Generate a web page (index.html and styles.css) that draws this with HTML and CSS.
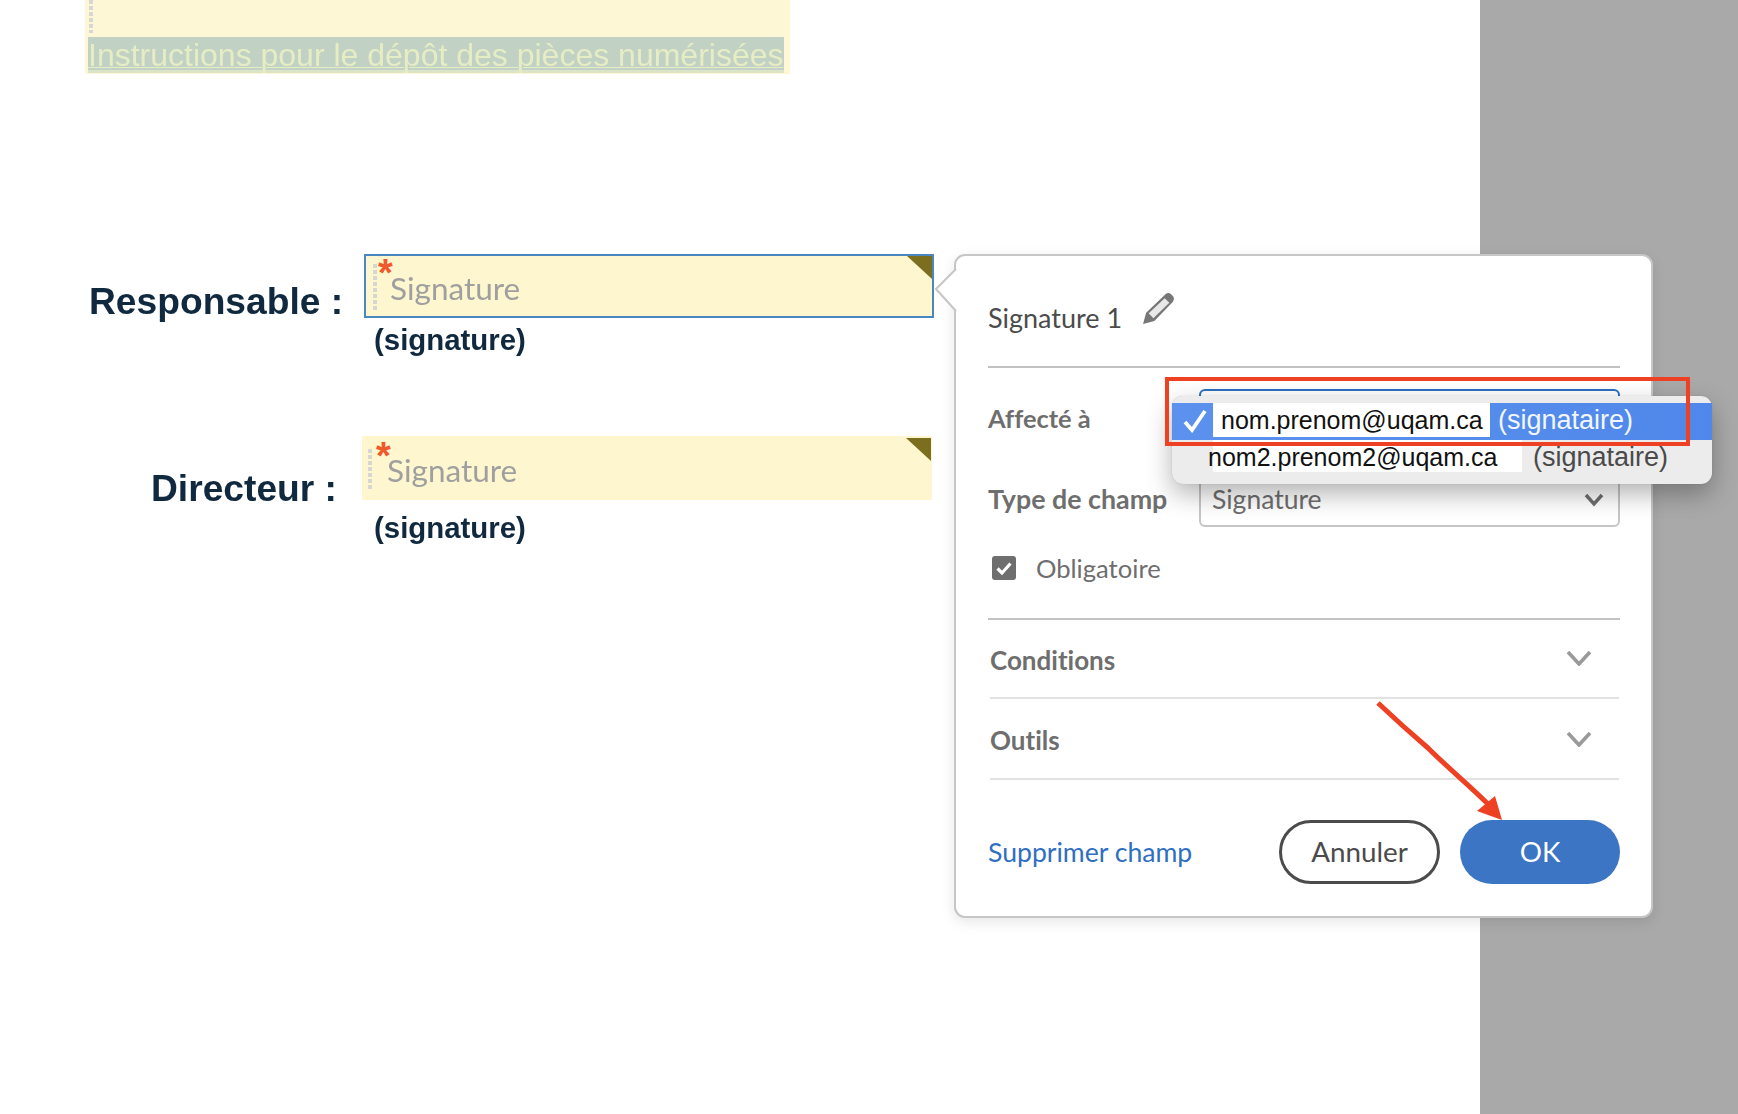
FILE: index.html
```html
<!DOCTYPE html>
<html lang="fr">
<head>
<meta charset="utf-8">
<title>Signature</title>
<link rel="stylesheet" href="styles.css">
</head>
<body>
<div class="stage">
  <main class="doc">
    <div class="notice">
      <div class="dots notice-dots"></div>
      <a class="notice-link">Instructions pour le dépôt des pièces numérisées</a>
    </div>
    <section class="sign-row row-a">
      <div class="sign-label">Responsable :</div>
      <div class="sign-col">
        <div class="field field-active">
          <span class="dots field-dots"></span>
          <span class="star">*</span>
          <span class="field-text">Signature</span>
          <span class="corner"></span>
        </div>
        <div class="caption">(signature)</div>
      </div>
    </section>
    <section class="sign-row row-b">
      <div class="sign-label">Directeur :</div>
      <div class="sign-col">
        <div class="field">
          <span class="dots field-dots"></span>
          <span class="star">*</span>
          <span class="field-text">Signature</span>
          <span class="corner"></span>
        </div>
        <div class="caption">(signature)</div>
      </div>
    </section>
  </main>
  <aside class="gutter"></aside>

  <div class="panel">
    <svg class="pointer" width="22" height="44" viewBox="0 0 22 44"><path d="M21 1 L1 21 L21 43" fill="#fff" stroke="#c6c6c6" stroke-width="2"/></svg>
    <header class="panel-head">
      <span class="panel-title">Signature 1</span>
      <svg class="pencil" width="33" height="33" viewBox="0 0 32 32">
        <path d="M1 31 L4 20 L23 2 Q25.5 0 28 2 L30.5 4.5 Q32 7 30 9.5 L12 28 Z" fill="#777"/>
        <path d="M6.5 20.5 L22 6 L26.5 10.5 L11 25.5 Z" fill="#e8e8e8"/>
      </svg>
    </header>
    <div class="form-row row-assign">
      <label class="form-label">Affecté à</label>
      <div class="select select-open"></div>
    </div>
    <div class="form-row row-type">
      <label class="form-label">Type de champ</label>
      <div class="select">
        <span class="select-value">Signature</span>
        <svg class="chev" width="20" height="14" viewBox="0 0 20 14"><path d="M2 2 L10 11 L18 2" fill="none" stroke="#6e6e6e" stroke-width="3.4"/></svg>
      </div>
    </div>
    <div class="check-row">
      <svg class="checkbox" width="24" height="24" viewBox="0 0 24 24"><rect width="24" height="24" rx="3" fill="#6e6e6e"/><path d="M5.5 12.5 L10 17 L18.5 7.5" fill="none" stroke="#fff" stroke-width="3.2"/></svg>
      <span>Obligatoire</span>
    </div>
    <div class="accordion accordion-first">
      <span class="accordion-title">Conditions</span>
      <svg class="chev-light" width="26" height="16" viewBox="0 0 26 16"><path d="M2 2 L13 14 L24 2" fill="none" stroke="#9a9a9a" stroke-width="3.6"/></svg>
    </div>
    <div class="accordion accordion-last">
      <span class="accordion-title">Outils</span>
      <svg class="chev-light" width="26" height="16" viewBox="0 0 26 16"><path d="M2 2 L13 14 L24 2" fill="none" stroke="#9a9a9a" stroke-width="3.6"/></svg>
    </div>
    <footer class="panel-foot">
      <a class="delete">Supprimer champ</a>
      <button class="btn btn-cancel">Annuler</button>
      <button class="btn btn-ok">OK</button>
    </footer>

    <div class="menu">
      <div class="menu-item menu-selected">
        <svg class="tick" width="24" height="24" viewBox="0 0 24 24"><path d="M2 13 L9 21 L22 2" fill="none" stroke="#fff" stroke-width="3.8"/></svg>
        <span class="mail mail-a">nom.prenom@uqam.ca</span>
        <span class="role role-a">(signataire)</span>
      </div>
      <div class="menu-item">
        <span class="mail mail-b"><span class="mail-shift">nom2.prenom2@uqam.ca</span></span>
        <span class="role role-b">(signataire)</span>
      </div>
    </div>
  </div>

  <div class="callout-box"></div>
  <svg class="callout-arrow" width="150" height="140" viewBox="0 0 150 140">
    <path d="M2 3 C20 20 38 36 52 48 C72 68 92 84 113 105" fill="none" stroke="#ee4023" stroke-width="5"/>
    <path d="M126 120 L119 96 L101 111 Z" fill="#ee4023"/>
  </svg>
</div>
</body>
</html>
```
FILE: styles.css
```css
* { box-sizing: border-box; }
html, body { margin: 0; padding: 0; }
body { background: #fff; font-family: "Lato", "Liberation Sans", sans-serif; font-variant-ligatures: none; overflow: hidden; }

.stage { position: relative; display: flex; width: 1738px; height: 1114px; overflow: hidden; }
.doc { width: 1480px; height: 1114px; background: #fff; font-family: "Liberation Sans", Arial, sans-serif; }
.gutter { flex: 1; background: #a9a9a9; }

/* Document */
.notice { margin-left: 85px; width: 705px; height: 74px; background: #fef7d6; display: flex; flex-direction: column; }
.dots { display: block; width: 4px; background-image: repeating-linear-gradient(to bottom, #d6d6d2 0 4px, transparent 4px 6px); }
.notice-dots { height: 33px; margin-left: 4px; }
.notice-link { display: block; width: 696px; height: 36px; margin: 4px 0 0 3px; background: #c1d1c4; background-clip: padding-box; border-bottom: 3px solid #dbe4c6; color: #e6edc4; font-size: 32px; line-height: 36px; text-decoration: underline; text-decoration-thickness: 1px; white-space: nowrap; filter: blur(.4px); }

.sign-row { display: flex; align-items: flex-start; }
.row-a { margin-top: 180px; padding-left: 89px; }
.row-b { margin-top: 79px; padding-left: 151px; }
.sign-label { font-weight: 700; font-size: 37.2px; line-height: 44px; color: #10293f; white-space: nowrap; filter: blur(.4px); }
.row-a .sign-label { padding-top: 25px; width: 275px; }
.row-b .sign-label { padding-top: 30px; width: 211px; }
.sign-col { width: 570px; }
.field { position: relative; height: 64px; background: #fef6cf; font-family: "Lato", sans-serif; }
.field-active { border: 2px solid #4a86bf; }
.field-dots { position: absolute; left: 7px; top: 8px; height: 46px; }
.row-b .field-dots { left: 6px; top: 13px; height: 42px; }
.star { position: absolute; left: 12px; top: 7px; color: #ef5a2c; font-size: 38px; line-height: 20px; font-family: "Liberation Sans", sans-serif; font-weight: 700; }
.row-b .star { left: 14px; top: 10px; }
.field-text { position: absolute; left: 24px; top: 12px; font-size: 31.5px; line-height: 40px; color: #9f9f9f; filter: blur(.3px); }
.row-b .field-text { left: 25px; top: 14px; }
.corner { position: absolute; right: 0; top: 0; width: 25px; height: 23px; background: #7c6e1f; clip-path: polygon(0 0, 100% 0, 100% 100%); }
.row-b .corner { right: 1px; top: 2px; }
.caption { font-weight: 700; font-size: 29.4px; line-height: 34px; color: #10293f; white-space: nowrap; filter: blur(.4px); }
.row-a .caption { margin: 5px 0 0 10px; }
.row-b .caption { margin: 11px 0 0 12px; }

/* Panel */
.panel { position: absolute; left: 954px; top: 254px; width: 699px; height: 664px; background: #fff; border: 2px solid #c6c6c6; border-radius: 11px; padding: 0 31px 0 32px; box-shadow: 0 4px 14px rgba(0,0,0,.10); color: #6e6e6e; }
.pointer { position: absolute; left: -21px; top: 12px; }
.panel-head { height: 112px; border-bottom: 2px solid #c2c2c2; display: flex; align-items: flex-start; padding-top: 39px; }
.panel-title { font-size: 27px; line-height: 46px; color: #4b4b4b; }
.pencil { margin: -3px 0 0 20px; }
.form-row { display: flex; align-items: center; height: 54px; }
.row-assign { margin-top: 21px; }
.row-type { margin-top: 30px; }
.form-label { width: 211px; flex: none; font-size: 26.8px; font-weight: 700; color: #6e6e6e; white-space: nowrap; }
.row-assign .form-label { font-size: 25.4px; padding-top: 4px; }
.row-type .form-label { padding-bottom: 2px; }
.select { flex: 1; height: 54px; border: 2px solid #c6c6c6; border-radius: 6px; display: flex; align-items: center; justify-content: space-between; padding: 0 14px 0 11px; font-size: 26.5px; color: #6e6e6e; }
.select-value { padding-bottom: 3px; }
.select-open { border-color: #2d6fc0; }
.chev { display: block; }
.check-row { display: flex; align-items: center; gap: 20px; height: 91px; padding-bottom: 9px; margin-left: 4px; font-size: 25.6px; color: #6e6e6e; }
.checkbox { display: block; }
.accordion { position: relative; height: 81px; margin-left: 2px; margin-right: 1px; display: flex; align-items: center; justify-content: space-between; padding-right: 27px; font-size: 26px; font-weight: 700; color: #6e6e6e; border-bottom: 2px solid #e2e2e2; }
.accordion-title { padding-top: 4px; }
.accordion-last .accordion-title { padding-top: 2px; }
.accordion-first::before { content: ""; position: absolute; left: -2px; right: -1px; top: 0; height: 2px; background: #c2c2c2; }
.panel-foot { display: flex; align-items: center; margin-top: 40px; }
.delete { font-size: 26.6px; color: #2f6fc2; margin-right: auto; white-space: nowrap; }
.btn { height: 64px; width: 161px; border-radius: 32px; font-family: inherit; font-size: 27.8px; padding: 0 0 2px; }
.btn-cancel { background: #fff; border: 3.5px solid #4b4b4b; color: #4b4b4b; margin-right: 20px; }
.btn-ok { width: 160px; background: #3b75c4; border: 0; color: #fff; }

/* Native-looking menu */
.menu { position: absolute; left: 216px; top: 140px; width: 540px; height: 88px; padding-top: 7px; background: #ececec; border-radius: 11px; box-shadow: 0 10px 26px rgba(0,0,0,.30), 0 0 1px rgba(0,0,0,.25); font-family: "Liberation Sans", Helvetica, Arial, sans-serif; font-size: 25px; }
.menu-item { display: flex; align-items: flex-start; height: 32px; padding-left: 41px; position: relative; white-space: nowrap; }
.menu-selected { height: 37px; background: linear-gradient(to right, #5c92ee, #4f88ea); }
.tick { position: absolute; left: 11px; top: 6px; }
.mail { display: block; background: #fff; color: #111; height: 34px; line-height: 34px; }
.mail-a { width: 277px; padding-left: 8px; }
.mail-b { width: 309px; height: 32px; line-height: 34px; }
.mail-shift { margin-left: -5px; }
.role { font-size: 27px; line-height: 34px; }
.role-a { color: #f2f6ff; margin-left: 8px; }
.role-b { color: #4a4a4a; margin-left: 11px; line-height: 34px; }

/* Annotations */
.callout-box { position: absolute; left: 1165px; top: 377px; width: 525px; height: 69px; border: 4px solid #ee4023; }
.callout-arrow { position: absolute; left: 1376px; top: 700px; }
```
